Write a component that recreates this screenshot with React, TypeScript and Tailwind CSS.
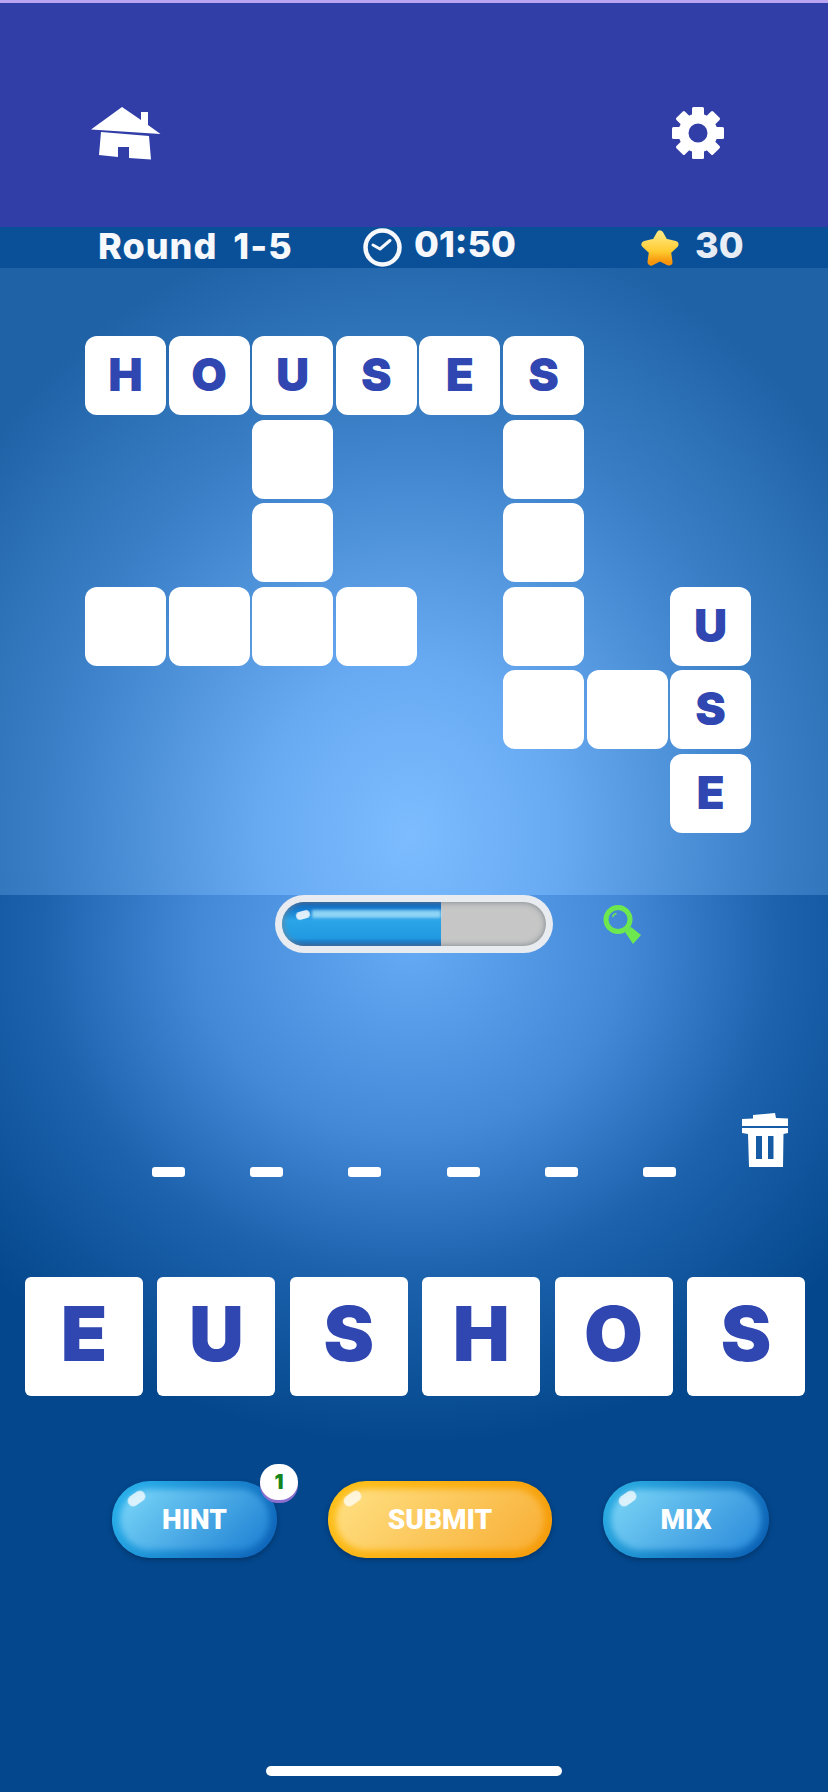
const cells: (string | null)[][] = [
  ["H", "O", "U", "S", "E", "S", null, null],
  [null, null, "", null, null, "", null, null],
  [null, null, "", null, null, "", null, null],
  ["", "", "", "", null, "", null, "U"],
  [null, null, null, null, null, "", "", "S"],
  [null, null, null, null, null, null, null, "E"],
];

const tiles = ["E", "U", "S", "H", "O", "S"];

function Home() {
  return (
    <svg width="70" height="56" viewBox="0 0 70 56">
      <path fill="#fff" d="M31 0 L50 13 L50 5 L57 5 L57 18 L69.5 27 L0 22.5 Z" />
      <path fill="#fff" d="M10 25 L58 29 L60 52.5 L38 51 L38 40 L27 40 L27 50 L8 48 Z" />
    </svg>
  );
}

function Gear() {
  const teeth = [0, 45, 90, 135, 180, 225, 270, 315];
  return (
    <svg width="52" height="52" viewBox="0 0 52 52">
      {teeth.map((a) => (
        <rect key={a} x="20" y="0" width="12" height="12" rx="1.5" fill="#fff" transform={`rotate(${a} 26 26)`} />
      ))}
      <circle cx="26" cy="26" r="14.5" fill="none" stroke="#fff" strokeWidth="10" />
    </svg>
  );
}

function Clock() {
  return (
    <svg width="39" height="39" viewBox="0 0 39 39">
      <circle cx="19.5" cy="19.5" r="17" fill="none" stroke="#f6f8fc" strokeWidth="4.5" />
      <path d="M10 17 L17 21 L27 12.5" fill="none" stroke="#f6f8fc" strokeWidth="3" strokeLinecap="round" strokeLinejoin="round" />
    </svg>
  );
}

function Star() {
  return (
    <svg width="42" height="40" viewBox="0 0 42 40">
      <defs>
        <linearGradient id="starFill" x1="0" y1="0" x2="0" y2="1">
          <stop offset="0" stopColor="#ffe77e" />
          <stop offset="0.62" stopColor="#ffcb30" />
          <stop offset="1" stopColor="#f6940c" />
        </linearGradient>
      </defs>
      <path
        fill="url(#starFill)"
        stroke="url(#starFill)"
        strokeWidth="7"
        strokeLinejoin="round"
        d="M21 6 L25.5 14 L36 16.5 L28.5 23.5 L30 34 L21 29.5 L12 34 L13.5 23.5 L6 16.5 L16.5 14 Z"
      />
    </svg>
  );
}

function Magnifier() {
  return (
    <svg width="40" height="42" viewBox="0 0 40 42">
      <circle cx="15" cy="14.5" r="12" fill="none" stroke="#6de84f" strokeWidth="5" />
      <path d="M9.5 12 Q10.5 9 13.5 8.5" fill="none" stroke="#6de84f" strokeWidth="1.5" />
      <path d="M22 27 L28 22 L38 30 L30 39 Z" fill="#6de84f" />
    </svg>
  );
}

function Trash() {
  return (
    <svg width="48" height="56" viewBox="0 0 48 56">
      <path fill="#fff" d="M12 3 L34 1 L35 6 L47 6.5 L47 14 L1 14 L1 7 L12 6.5 Z" />
      <path
        fill="#fff"
        fillRule="evenodd"
        d="M1 16 L47 16 L47 21 L42.5 22 L42 55 L8 55 L7 22 L1 21 Z M15 24 L15 47 L21 47 L21 24 Z M27 24 L27 47 L32.5 47 L32.5 24 Z"
      />
    </svg>
  );
}

function GlossyButton({ label, className, shine }: { label: string; className: string; shine: string }) {
  return (
    <button className={`relative h-[77px] rounded-[38px] flex items-center justify-center overflow-hidden ${className}`}>
      <span className={`absolute inset-[8px] rounded-[30px] blur-[3px] ${shine}`} />
      <span className="absolute left-[15px] top-[12px] w-[19px] h-[11px] rounded-full bg-white/75 blur-[0.5px] -rotate-[35deg]" />
      <span className="relative font-['Roboto',sans-serif] font-black text-[28px] leading-none text-white">{label}</span>
    </button>
  );
}

export default function App() {
  return (
    <div className="relative w-[828px] h-[1792px] overflow-hidden flex flex-col font-['Inter',sans-serif] bg-[#04478c]">
      <div className="h-[3px] bg-[#b9a4f2]" />
      <header className="h-[224px] bg-[#323ea8] flex items-start justify-between pl-[91px] pr-[104px] pt-[104px]">
        <Home />
        <Gear />
      </header>

      <div className="h-[41px] bg-[#0a5098] flex items-center text-[#f6f8fc] font-extrabold text-[36px] leading-none">
        <span className="ml-[98px] w-[265px] mb-[3px] whitespace-nowrap tracking-[1px] [word-spacing:7px]">Round 1-5</span>
        <Clock />
        <span className="ml-[12px] w-[225px] mb-[8px]">01:50</span>
        <Star />
        <span className="ml-[14px] mb-[5px] text-[#e8ecf5]">30</span>
      </div>

      <section className="h-[627px] pt-[68px] pl-[85px] bg-[radial-gradient(ellipse_540px_620px_at_410px_566px,#7cbcff_0%,#68aaf2_28%,#3f84cc_62%,#1f62a6_100%)]">
        <div className="grid grid-cols-[repeat(8,81px)] auto-rows-[79px] gap-x-[2.6px] gap-y-[4.6px]">
          {cells.flat().map((c, i) =>
            c === null ? (
              <div key={i} />
            ) : (
              <div
                key={i}
                className="rounded-[12px] bg-white flex items-center justify-center pb-[3px] text-[#3046b0] font-black text-[46px] leading-none"
              >
                {c}
              </div>
            ),
          )}
        </div>
      </section>

      <section className="relative flex-1 bg-[radial-gradient(ellipse_560px_500px_at_410px_50px,#64aaf4_0%,#4489d8_38%,#1c62ad_66%,#04478c_100%)]">
        <div className="pl-[275px] flex items-center">
          <div className="w-[278px] h-[58px] rounded-[29px] bg-[#e8ebf0] p-[7px]">
            <div className="relative h-[44px] rounded-[22px] bg-[#c6c6c6] overflow-hidden">
              <div className="relative h-full w-[159px] bg-[linear-gradient(#0758ae_0%,#0d70c8_10%,#2ba4e8_42%,#229ae2_82%,#0b5cb2_100%)]">
                <span className="absolute left-[30px] right-0 top-[8px] h-[8px] blur-[1.5px] bg-[#b2ecff]/75" />
                <span className="absolute left-[14px] top-[9px] w-[14px] h-[8px] rounded-full bg-white/85 blur-[0.5px] -rotate-[15deg]" />
              </div>
              <span className="absolute inset-0 rounded-[22px] shadow-[inset_0_0_6px_#7a8088]" />
            </div>
          </div>
          <div className="ml-[50px] mt-[4px]">
            <Magnifier />
          </div>
        </div>

        <div className="mt-[159px] pl-[152px] flex items-end">
          <div className="flex gap-[65.2px]">
            {tiles.map((_, i) => (
              <div key={i} className="w-[33px] h-[10px] rounded-[3px] bg-white" />
            ))}
          </div>
          <div className="ml-[65px] mb-[9px]">
            <Trash />
          </div>
        </div>

        <div className="mt-[100px] pl-[25px] flex gap-[14.4px]">
          {tiles.map((t, i) => (
            <div
              key={i}
              className="w-[118px] h-[119px] rounded-[6px] bg-white flex items-center justify-center pb-[8px] text-[#3046b0] font-black text-[76px] leading-none"
            >
              {t}
            </div>
          ))}
        </div>

        <div className="mt-[85px] pl-[112px] flex gap-[51px]">
          <div className="relative">
            <GlossyButton
              label="HINT"
              className="w-[165px] bg-[linear-gradient(125deg,#2ab6ee,#0d5fb6)] shadow-[0_2px_5px_#033468]"
              shine="bg-[linear-gradient(135deg,#7cd8f9,#1c7fd3)]"
            />
            <span className="absolute left-[148px] -top-[17px] w-[38px] h-[36px] rounded-full bg-white shadow-[0_3px_0_#8d6fd0] flex items-center justify-center text-[#15861d] font-black text-[20px] leading-none">
              1
            </span>
          </div>
          <GlossyButton
            label="SUBMIT"
            className="w-[224px] bg-[linear-gradient(125deg,#ffc21a,#f59a0a)] shadow-[0_2px_5px_#033468]"
            shine="bg-[linear-gradient(135deg,#ffe184,#f8ae34)]"
          />
          <GlossyButton
            label="MIX"
            className="w-[166px] bg-[linear-gradient(125deg,#2cb2e6,#0a5cb2)] shadow-[0_2px_5px_#033468]"
            shine="bg-[linear-gradient(135deg,#7cd6f6,#2a8ada)]"
          />
        </div>

        <div className="absolute left-[266px] bottom-[16px] w-[296px] h-[10px] rounded-full bg-white" />
      </section>
    </div>
  );
}
